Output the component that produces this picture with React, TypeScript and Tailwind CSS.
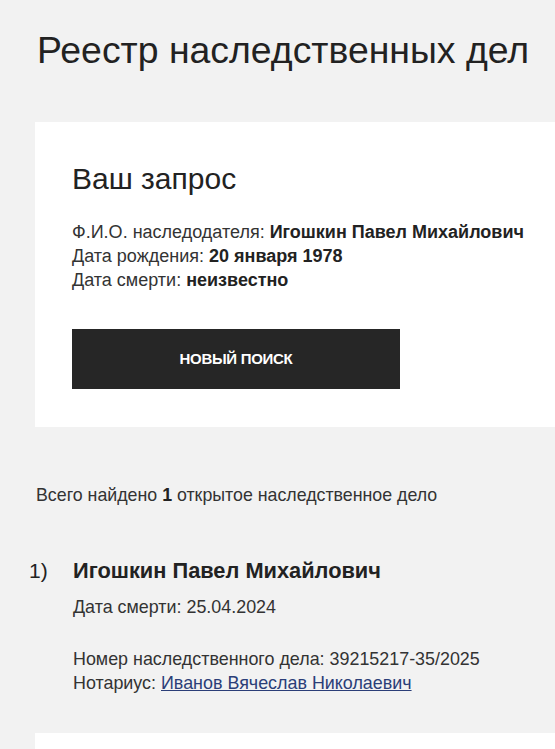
import React from "react";

export default function App() {
  return (
    <div className="min-h-[749px] bg-[#f2f2f2] text-[#222] overflow-hidden" style={{ fontFamily: '"Liberation Sans", Arial, sans-serif' }}>
      <h1 className="pl-[37px] pt-[28px] text-[37.4px] leading-[44px] font-normal text-[#222]">Реестр наследственных дел</h1>
      <div className="ml-[35px] mt-[50px] bg-white pl-[37px] pt-[40px] pb-[38px]">
        <h2 className="text-[30px] leading-[34px] font-normal">Ваш запрос</h2>
        <div className="mt-[24px] text-[18px] leading-[24px] text-[#333]">
          <div>Ф.И.О. наследодателя: <b className="text-[#222]">Игошкин Павел Михайлович</b></div>
          <div>Дата рождения: <b className="text-[#222]">20 января 1978</b></div>
          <div>Дата смерти: <b className="text-[#222]">неизвестно</b></div>
        </div>
        <button className="mt-[37px] w-[328px] h-[60px] bg-[#262626] text-white text-[15px] font-bold tracking-[-0.3px] flex items-center justify-center">НОВЫЙ ПОИСК</button>
      </div>
      <div className="pl-[36px] mt-[58px] text-[17.8px] leading-[20px] text-[#333]">
        Всего найдено <b className="text-[#222]">1</b> открытое наследственное дело
      </div>
      <div className="mt-[52px] flex">
        <div className="w-[73px] pl-[29px] text-[21px] leading-[28px] text-[#222]">1)</div>
        <div>
          <div className="text-[21.8px] leading-[28px] font-bold text-[#222]">Игошкин Павел Михайлович</div>
          <div className="mt-[10px] text-[17.9px] leading-[24px] text-[#333]">Дата смерти: 25.04.2024</div>
          <div className="mt-[28px] text-[17.9px] leading-[24px] text-[#333]">
            <div>Номер наследственного дела: 39215217-35/2025</div>
            <div>Нотариус: <a href="#" className="text-[#2b3e78] underline">Иванов Вячеслав Николаевич</a></div>
          </div>
        </div>
      </div>
      <div className="ml-[35px] mt-[38px] h-[100px] bg-white"></div>
    </div>
  );
}
